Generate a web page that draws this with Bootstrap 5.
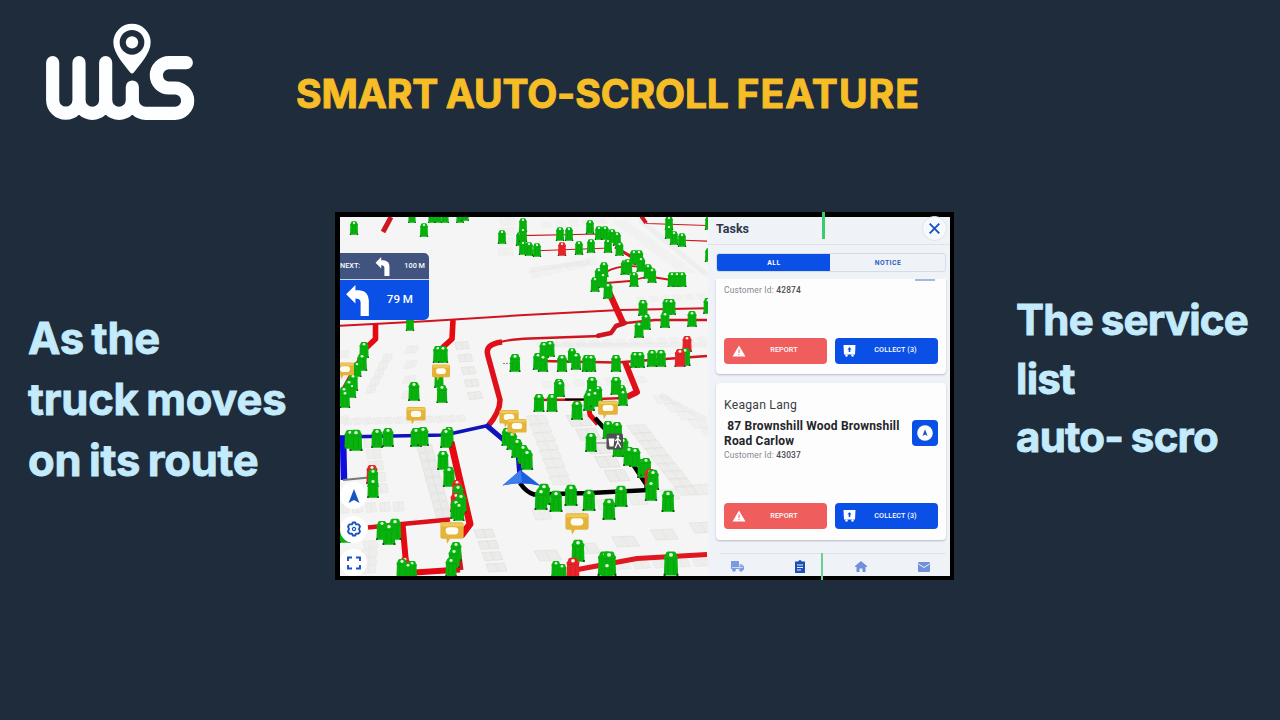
<!DOCTYPE html>
<html lang="en">
<head>
<meta charset="utf-8">
<meta name="viewport" content="width=device-width, initial-scale=1">
<title>Smart auto-scroll feature</title>
<link href="https://cdn.jsdelivr.net/npm/bootstrap@5.3.0/dist/css/bootstrap.min.css" rel="stylesheet">
<style>
body{background:#1f2c3b;font-family:Roboto,"Liberation Sans",sans-serif;overflow:hidden}
.stage{width:1280px;height:720px}
.topbar{height:212px;padding:10px 0 0 30px}
.headline{font:700 39px/1 Inter,"Liberation Sans",sans-serif;color:#f6bd27;margin:64px 0 0 86px;letter-spacing:-.1px;word-spacing:-1.5px;white-space:nowrap;-webkit-text-stroke:1px #f6bd27}
.headline span{letter-spacing:1.05px}
.caption-l,.caption-r{font-family:Inter,"Liberation Sans",sans-serif;font-weight:700;color:#c3ebfc;white-space:nowrap;-webkit-text-stroke:.9px #c3ebfc}
.caption-l{width:335px;padding:96px 0 0 28px;font-size:43.5px;line-height:61px;letter-spacing:-.2px;word-spacing:-2.5px}
.caption-r{padding:79px 0 0 62px;font-size:42px;line-height:58.7px;letter-spacing:-.75px;word-spacing:-1.5px}
.device{width:619px;height:368px;border:5px solid #000;border-right-width:4px;border-bottom-width:4px;background:#f5f5f5}
.mapbox{width:368px;height:359px}
.turns{left:0;top:36px;width:89px;height:67px;border-radius:0 5px 5px 0;color:#fff;overflow:hidden}
.turn-next{height:27px;background:#40547f;border-bottom:1px solid #cfd9ee;font-size:7.3px;font-weight:500;padding:0 4px 0 0}
.turn-now{height:40px;background:#0b50e6;font-size:11.6px;font-weight:500;padding:0 16px 0 6px}
.tools{left:0;top:265px;gap:6.5px}
.tool{width:27px;height:27px;background:#fff;border-radius:50%}
.tasks{width:242px;height:359px;background:#eff3f8}
.tasks-head{height:28px;border-bottom:1px solid #dde2e8;padding:0 3px 3px 8px;color:#2e3648;font-size:12.5px;font-weight:700}
.closer{width:25px;height:25px;border-radius:50%;border:1px solid #dfe4ec;background:#f7f9fc;margin-top:-2px}
.tabs{margin:8px 4px 0 8px;height:19px;border:1px solid #d3dceb;border-radius:3px;font-size:6.8px;font-weight:700;letter-spacing:.5px;color:#2c62c0;overflow:hidden}
.tabs>div{padding:1px 0 0 2px}
.tabs .on{background:#0b50e6;color:#fff;margin:-1px 0 -1px -1px}
.feed{height:270px;margin-top:7px;padding:0 4px 0 8px;overflow:hidden}
.task{background:#fdfdfe;border-radius:4px;box-shadow:0 1px 2px rgba(50,60,80,.3);padding:0 8px;border:0}
.task-a{height:95px;border-radius:0 0 4px 4px}
.task-b{height:157px;margin-top:9px}
.cid{font-size:8.4px;line-height:10px;color:#85888d;letter-spacing:.2px}
.cid b{color:#4a4c50;font-weight:500}
.who{font-size:12.2px;line-height:14px;color:#3c3e42;letter-spacing:.22px}
.addr{font-size:12px;line-height:14.7px;font-weight:700;color:#242528;letter-spacing:.2px;white-space:nowrap}
.go{width:26px;height:26px;border-radius:4px;background:#0b50e6}
.act{width:103px;height:26px;border-radius:4px;border:0;padding:0 0 0 8px;font-size:7.2px;font-weight:500;letter-spacing:.12px;color:#fff;display:flex;align-items:center}
.act span{flex:1;text-align:center}
.act-rep{background:#ef5d5d}.act-col{background:#0b50e6}
.act-rep span{padding-right:5px}.act-col span{padding-right:3px}
.tabbar{margin:4px 4px 0 12px;height:23px;border-top:1px solid #dde3ea;padding:3px 16px 0 11px}
.tick-a{left:822px;top:212px;width:3px;height:27px;background:#3bcb68}
.tick-b{left:821px;top:553px;width:1.5px;height:27px;background:#69cf8d}
svg{display:block;flex:none}
</style>
</head>
<body>
<div class="stage position-relative">
  <header class="topbar d-flex align-items-start">
    <svg width="180" height="125" viewBox="0 0 540 375" fill="none" stroke="#fdfeff" stroke-width="39.5" stroke-linecap="round">
      <path d="M68 158V270a39.5 39.5 0 0 0 79 0V158M147 270a40 40 0 0 0 80 0V158M227 270a40 40 0 0 0 80 0V231M307 270a40 40 0 0 0 40 40H435a38 38 0 0 0 0-76H417a38 38 0 0 1 0-76H469"/>
      <path d="M306 41a56 56 0 0 0-56 56c0 34 32 66 50 90q6 7 12 0c18-24 50-56 50-90a56 56 0 0 0-56-56z" fill="#fdfeff" stroke="none"/>
      <circle cx="306" cy="97" r="37" fill="#1f2c3b" stroke="none"/><circle cx="306" cy="97" r="18.5" fill="#fdfeff" stroke="none"/>
    </svg>
    <h1 class="headline">SMART AUTO-SCROLL <span>FEATURE</span></h1>
  </header>
  <main class="d-flex">
    <div class="caption-l">As the<br>truck moves<br>on its route</div>
    <section class="device d-flex">
      <div class="mapbox position-relative overflow-hidden">
        <svg id="map" width="368" height="359" viewBox="340 217 368 359">
          <defs>
            <g id="bin"><path d="M-3.8-15.500Q-3.800-17.500-2.300-18H2.300Q3.800-17.500 3.800-15.500L4.900-14 4.500-12 4.900-.3H-4.900L-4.500-12-4.900-14z"/><path d="M-4.200-12.500H4.200M-2-11V-1M1.800-11V-1" stroke="#000" stroke-opacity=".11" stroke-width=".7"/><path d="M-5.100-1.600h1.400V0h-1.400zM3.700-1.600h1.400V0h-1.400z" fill="#174a1c"/><circle cy="-15.600" r="1.400" fill="#e4fbe0"/></g>
            <g id="note"><path d="M-10-10H10Q12-10 12-8V5Q12 7 10 7H-2L-5 12-6 7H-10Q-12 7-12 5V-8Q-12-10-10-10z" fill="#e5b339"/><path d="M-11-9H11V-6H-11z" fill="#f0c95d"/><rect x="-6.500" y="-5" width="13" height="7.500" rx="3.500" fill="#fffdf1"/></g>
          </defs>
          <rect x="340" y="217" width="368" height="359" fill="#f5f5f5"/>
          <g id="houses" stroke="#d4d4d1" stroke-width=".5" fill="#ebebe9"></g>
          <g fill="none" stroke="#e4e4e4" stroke-width="5"><path d="M640 220 707 275M530 270 590 262M550 345H707M660 395 707 420" opacity=".4"/></g>
          <g fill="none" stroke="#cf1520" stroke-linejoin="round">
            <path d="M340 325.7 430 321 520 315.3 620 310 707 308.3" stroke-width="2"/>
            <path d="M520 235.700 600 234 618 242M530 251 610 248 M640 217l7 6.500 60 2M669 232l7 8 31 1.200" stroke-width="1.200"/>
            <path d="M606 272Q620 264 642 267L652 277 678 281M606 283 630 281 650 276" stroke-width="1.800"/>
            <path d="M615 247 640 262" stroke-width="3"/>
            <path d="M608 290 623 323" stroke-width="6.500" stroke="#df1019"/>
            <path d="M707 320 655 320 626 323 M600 336 530 338.500Q488 340 486.500 352" stroke-width="2.400"/>
            <path d="M625 323 616 326 611 333 598 335.800" stroke-width="4.500" stroke-linecap="round"/>
            <path d="M502 342Q484 344 488 356L500 400Q500 412 488 426" stroke-width="5.500" stroke="#e0101a"/>
            <path d="M540 361 616 362.500 665 359 707 356" stroke-width="2.600"/>
            <path d="M625 362 637 392 627 397" stroke-width="6" stroke="#e0101a"/>
            <path d="M540 400 584 399.500 625 398 637 394" stroke-width="2.600"/>
            <path d="M391 217 383 232" stroke-width="5"/><path d="M642 217l4 6" stroke-width="4"/>
            <path d="M375.500 324V339L366 348M453 320 452 339 441 349" stroke-width="5.600" stroke="#e50a12"/>
            <path d="M366 348 344 388" stroke-width="4"/>
            <path d="M451 442 470 524 461 536" stroke-width="7" stroke="#e50a12"/>
            <path d="M368 527.500 402 524 450 519.500" stroke-width="4.500" stroke="#dc101a"/>
            <path d="M402.500 524 406 563 410 573M415 572.500 460 569.500" stroke-width="6" stroke="#e50a12"/><path d="M458 548 461 570" stroke-width="5"/>
            <path d="M575 570 637 558.500 707 554.500" stroke-width="5" stroke="#df1720"/>
            <path d="M587 399 590 415 598 424" stroke-width="5" stroke="#e50a12"/>
          </g>
          <g fill="none"><path d="M565 399.500H585" stroke="#000" stroke-width="2"/><path d="M595 418 603 427 617 440 640 475 650 490 590 493 534 494.500Q526 492 520 483" stroke="#000" stroke-width="4.500"/>
            <path d="M340 437 445 435 488 425.500" stroke="#1212bb" stroke-width="3.500"/><path d="M486 425 518 452 520 478" stroke="#1212bb" stroke-width="5"/><path d="M343 437 344 480" stroke="#0d0de0" stroke-width="6.500"/>
            <path d="M343 480 374 477" stroke="#777" stroke-width="2"/><path d="M520 363 503 363.500" stroke="#888" stroke-width="1" stroke-dasharray="2 1"/><path d="M596 443H612" stroke="#888" stroke-width="1"/></g>
          <g id="bins"></g>
          <g><rect x="606.500" y="433.500" width="16.500" height="16" rx="2" fill="#4c5050"/><path d="M608.500 438.500h6l-1 8h-4z" fill="#fff"/><circle cx="618" cy="436.500" r="1.300" fill="#fff"/><path d="M617.800 438v4l-2.500 6m2.500-6 3 5.500m-5.500-6.500 2.500-2.500 3 3" stroke="#fff" stroke-width="1.300" fill="none"/></g>
          <path d="M520.500 470 541 486Q521 481.500 502.500 485.500z" fill="#1e5fe0"/><path d="M520.500 470 522 482 502.500 485.500z" fill="#3f7cec"/>
          <g id="notes"></g>
        </svg>
        <div class="turns position-absolute">
          <div class="turn-next d-flex align-items-center justify-content-between"><span>NEXT:</span>
            <svg width="15" height="19" viewBox="0 0 22 30" fill="#fff"><path d="M0 9 9 0V5H13Q22 6 22 15V30H14V17Q14 13 9 13V18z"/></svg><span>100 M</span></div>
          <div class="turn-now d-flex align-items-center justify-content-between">
            <svg width="23" height="31" viewBox="0 0 22 30" fill="#fff"><path d="M0 9 9 0V5H13Q22 6 22 15V30H14V17Q14 13 9 13V18z"/></svg><span>79 M</span></div>
        </div>
        <div class="tools position-absolute d-flex flex-column">
          <div class="tool d-flex align-items-center justify-content-center"><svg width="12" height="14" viewBox="0 0 12 14"><path d="M6 0 11.500 14 6 11 .5 14z" fill="#1853c4"/></svg></div>
          <div class="tool d-flex align-items-center justify-content-center"><svg width="16" height="16" viewBox="-8 -8 16 16" fill="none" stroke="#1853c4" stroke-linejoin="round"><path d="M-1.200-6.500H1.200L2-4.700 4.700-4.600 6-2.500 5 0 6 2.500 4.700 4.600 2 4.700 1.200 6.500H-1.200L-2 4.700-4.700 4.600-6 2.500-5 0-6-2.500-4.700-4.600-2-4.700z" stroke-width="1.900"/><circle r="1.600" stroke-width="1.300"/></svg></div>
          <div class="tool d-flex align-items-center justify-content-center"><svg width="14" height="14" viewBox="0 0 14 14" fill="none" stroke="#1853c4" stroke-width="1.900"><path d="M1 5V1.500H5M9 1.500H13V5M13 9V12.500H9M5 12.500H1V9"/></svg></div>
        </div>
      </div>
      <aside class="tasks">
        <div class="tasks-head d-flex align-items-center justify-content-between"><span>Tasks</span>
          <div class="closer d-flex align-items-center justify-content-center"><svg width="11" height="11" viewBox="0 0 11 11"><path d="M.7.700 10.300 10.300M10.300.7.7 10.300" stroke="#1652c8" stroke-width="1.900"/></svg></div></div>
        <div class="tabs d-flex text-center"><div class="on w-50 d-flex align-items-center justify-content-center">ALL</div><div class="w-50 d-flex align-items-center justify-content-center">NOTICE</div></div>
        <div class="feed">
          <div class="task task-a card"><svg class="ms-auto" width="23" height="2"><rect y=".5" width="20" height="1" fill="#4b77b0"/></svg>
            <div class="cid" style="margin-top:4px">Customer Id: <b>42874</b></div>
            <div class="d-flex gap-2" style="margin-top:42.500px">
              <button class="act act-rep" type="button"><svg width="14" height="12" viewBox="0 0 14 12"><path d="M7 .5 13.500 11.500H.5z" fill="#fff"/><path d="M7 4.500V8M7 9v1.200" stroke="#ef5d5d" stroke-width="1"/></svg><span>REPORT</span></button>
              <button class="act act-col" type="button"><svg width="13" height="12" viewBox="0 0 13 12"><path d="M.5 0H12.500L12 9.500H1z" fill="#fff"/><circle cx="3.500" cy="10.500" r="1.200" fill="#fff"/><circle cx="9.500" cy="10.500" r="1.200" fill="#fff"/><path d="M6.500 2 8.500 4.500H7.300V7H5.700V4.500H4.500z" fill="#0b50e6"/></svg><span>COLLECT (3)</span></button>
            </div></div>
          <div class="task task-b card">
            <div class="who" style="margin-top:15px">Keagan Lang</div>
            <div class="d-flex justify-content-between align-items-start" style="margin-top:7px"><div><div class="addr">&nbsp;87 Brownshill Wood Brownshill<br>Road Carlow</div><div class="cid" style="margin-top:1.500px">Customer Id: <b>43037</b></div></div>
              <div class="go d-flex align-items-center justify-content-center" style="margin-top:1px"><svg width="16" height="16" viewBox="0 0 16 16"><circle cx="8" cy="8" r="7.800" fill="#fff"/><path d="M8 4.200 10.500 11 8 9.600 5.500 11z" fill="#1450c8"/></svg></div></div>
            <div class="d-flex gap-2" style="margin-top:43px">
              <button class="act act-rep" type="button"><svg width="14" height="12" viewBox="0 0 14 12"><path d="M7 .5 13.500 11.500H.5z" fill="#fff"/><path d="M7 4.500V8M7 9v1.200" stroke="#ef5d5d" stroke-width="1"/></svg><span>REPORT</span></button>
              <button class="act act-col" type="button"><svg width="13" height="12" viewBox="0 0 13 12"><path d="M.5 0H12.500L12 9.500H1z" fill="#fff"/><circle cx="3.500" cy="10.500" r="1.200" fill="#fff"/><circle cx="9.500" cy="10.500" r="1.200" fill="#fff"/><path d="M6.500 2 8.500 4.500H7.300V7H5.700V4.500H4.500z" fill="#0b50e6"/></svg><span>COLLECT (3)</span></button>
            </div></div>
        </div>
        <nav class="tabbar d-flex justify-content-between align-items-center">
          <svg width="13" height="11" viewBox="0 0 13 11" fill="#7b9be0"><path d="M0 0H8V8H0zM8.500 3H11L13 5.500V9H8.500z"/><circle cx="3" cy="8.800" r="2"/><circle cx="10" cy="9" r="1.800"/><path d="M1 6.500H12M8 4H12" stroke="#eff3f8" stroke-width=".7"/></svg>
          <svg width="10" height="13" viewBox="0 0 10 13"><path d="M0 1.500H3Q5-1.500 7 1.500H10V13H0z" fill="#1c50b8"/><path d="M2 5H8M2 7.500H8M2 10H6" stroke="#eaf0fa" stroke-width="1"/></svg>
          <svg width="12" height="11" viewBox="0 0 12 11" fill="#7090dc"><path d="M6 0 12 5V6H10.500V11H7.500V7.500H4.500V11H1.500V6H0V5z"/></svg>
          <svg width="12" height="10" viewBox="0 0 12 10"><rect width="12" height="10" rx="1" fill="#7090dc"/><path d="M.5 2 6 5.500 11.500 2" fill="none" stroke="#f1f5fb" stroke-width="1"/></svg>
        </nav>
      </aside>
    </section>
    <div class="caption-r">The service<br>list<br>auto- scro</div>
  </main>
  <div class="tick-a position-absolute"></div><div class="tick-b position-absolute"></div>
</div>
<script src="https://cdn.jsdelivr.net/npm/bootstrap@5.3.0/dist/js/bootstrap.bundle.min.js"></script>
<script>
// Bins: x, ground y, height, optional 1 for a red one
const bins=[[354,235,13],[412,223,12],[432,223,12],[438,223,12],[445,223,12],[460,223,12],[465,221,12],[424,237,13],[502,244,13],
[523,232,13],[520,246,13],[523,242,13],[560,241,13],[569,241,13],[590,234,13],[599,240,13],[605,240,13],[612,243,13],[617,246,13],[523,255,13],[529,256,13],[537,257,13],[562,256,13,1],[579,255,13],[591,253,13],[608,253,13],[619.5,256,13],
[634,265,14],[639,265,14],[625,275,14],[628,274,14],[641,272,14],[648,279,14],[652,283,14],[634,287,14],[672,287,14],[677,287,14],[682,287,14],[604,277,14],[599,283,14],[595,292,14],[603,288,14],[608,299,15],[669,230,13],[669,239,13],[674,245,13],[682,247,13],[709,230,13],[709,262,13],
[643,316,15],[667,315,15],[671,315,15],[708,314,15],[692,327,15],[665,328,15],[646,330,15],[639,338,15],[410,331,13],[687,352,15,1],[685,366,17],[680,367,17,1],[635,368,15],[640,368,15],[652,367,16],[661,367,16],[616,372,16],[587,372,16],[591,372,16],[572,363,14],[576,370,16],[562,372,16],[550,357,15],[544,358,15],[538,370,16],[543,372,16],[515,372,17],
[364,358,15],[362,371,16],[357,377,14],[353,391,16],[349,397,16],[344,404,16],[352,398,13],[345,408,16],[438,363,16],[443,363,16],[439,388,15],[442,403,17],[414,401,18],
[559,397,17],[592,395,17],[616,395,17],[622,399,13],[598,401,14],[590,403,14],[560,397,15],[539,412,17],[552,412,17],[577,420,18],[589,411,18],[595,407,15],[623,406,15],
[591,452,18],[608,439,17],[617,440,17],[623,457,18],[618,457,17],[629,466,18],[635,467,18],[643,478,18],[646,476,17],[650,488,18,1],[653,490,19],[651,501,19],[668,512,20],[621,507,20],[609,520,20],[589,511,20],[571,506,20],[556,512,20],[544,505,20],[541,510,20],
[507,446,17],[512,450,17],[517,458,18],[523,464,18],[527,470,19],
[350,449,18],[356,451,20],[377,448,18],[388,447,18],[416,447,18],[423,446,18],[449,443,15],[446,448,18],[443,470,18],[449,487,19],[372,484,18,1],[373,487,17],[373,498,18],[457,497,16,1],[458,504,18],[456,512,18,1],[461,513,18],[456,519,18],[459,521,17],[345,543,18],[382,540,18],[395,540,20],[389,545,20],[405,573,15,1],[402,578,18],[412,578,16],[408,580,16],[456,561,18],[454,568,18],[451,577,18],
[578,562,21],[605,576,23],[609,576,23],[607,584,20],[671,576,23],[556,577,15],[562,580,15],[573,580,21,1]];
const put=(id,html)=>document.getElementById(id).innerHTML=html;
put('bins',bins.map(([x,y,h,r])=>`<use href="#bin" transform="translate(${x} ${y}) scale(${h/18*1.14} ${h/18*1.06})" fill="${r?'#e8242a':'#08b30e'}"/>`).join(''));
put('notes',[[416,415,.8],[441,372,.75],[345,370,.75],[509,418,.8],[517,427,.8],[608,409,.82],[577,523,.97],[452,532,.97]].map(([x,y,s])=>`<use href="#note" transform="translate(${x} ${y}) scale(${s})"/>`).join(''));
// Rows of houses: from, to, count, width, height, lean, opacity
const rows=[[346,422,460,419,12,8,6,2,.5],[371,443,380,489,5,14,9,1,.6],[424,449,442,514,9,15,7,2,.9],[343,509,398,507,5,10,9,1,.6],[413,350,410,395,4,11,7,-3,.5],[461,346,474,396,5,13,7,2,.8],[345,355,343,420,4,9,7,-2,.4],[388,358,372,390,5,9,7,-2,.5],[483,534,495,568,4,18,8,3,.9],[370,545,368,570,4,14,7,1,.6],
[535,420,558,481,8,18,8,5,.65],[576,421,614,476,5,20,11,6,.9],[636,430,684,491,9,18,9,6,.7],[660,400,707,432,5,15,8,6,.4],[540,515,700,490,6,16,10,4,.6],[545,556,700,528,5,22,10,6,.8],[546,385,640,380,7,9,6,3,.35],[540,345,700,340,13,9,5,3,.35],[620,225,680,270,7,13,6,8,.25],[507,222,505,252,4,14,7,1,.35],[534,275,590,262,6,9,6,3,.3],[620,566,700,563,5,15,7,3,.6],[545,225,600,222,5,9,5,3,.3],[640,300,700,297,6,8,5,3,.3]];
put('houses',rows.map(([x1,y1,x2,y2,n,w,h,k,o])=>Array.from({length:n},(_,i)=>{const t=i/(n-1),x=x1+(x2-x1)*t-w/2,y=y1+(y2-y1)*t-h/2;
return `<path opacity="${o}" d="M${x} ${y}l${w} -1 ${k} ${h} -${w} 1zM${x+w*.5} ${y-.5}l${k} ${h}"/>`}).join('')).join(''));
</script>
</body>
</html>
